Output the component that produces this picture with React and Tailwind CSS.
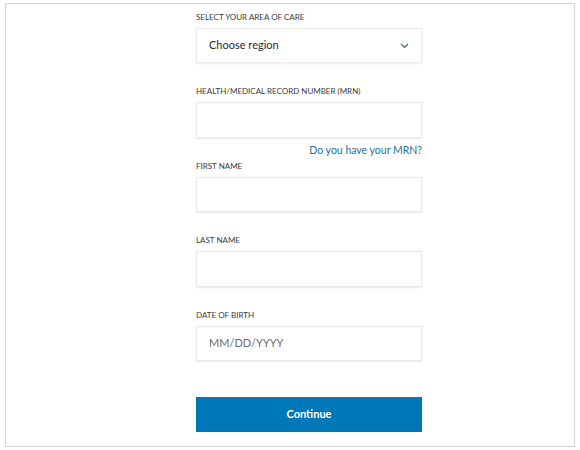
import React from 'react';

const Label = ({ children, className = '' }) => (
  <div className={`h-[12px] text-[8px] leading-[12px] text-[#3a3a3a] ${className}`}>
    {children}
  </div>
);

const Field = ({ placeholder, className = '' }) => (
  <div
    className={`h-[35px] mt-[5px] bg-white border border-[#e8e8e8] shadow-[0_1px_2px_rgba(0,0,0,0.08)] flex items-center px-[12px] text-[11px] text-[#6b6b6b] ${className}`}
  >
    {placeholder}
  </div>
);

const App = () => {
  return (
    <div className="w-[580px] h-[450px] bg-white pt-[3px] pl-[5px]" style={{ fontFamily: 'Lato, "Open Sans", sans-serif' }}>
      <div className="w-[570px] h-[444px] border border-[#d6d6d6] pl-[190px] pt-[7px]">
        <div className="w-[226px] flex flex-col">
          {/* Area of care */}
          <Label>SELECT YOUR AREA OF CARE</Label>
          <div className="h-[35px] mt-[5px] bg-white border border-[#ececec] shadow-[0_1px_2px_rgba(0,0,0,0.08)] flex items-center justify-between pl-[12px] pr-[12px] text-[11px] text-[#2b2b2b]">
            <span>Choose region</span>
            <svg width="9" height="6" viewBox="0 0 9 6" fill="none">
              <polyline points="1,1 4.5,4.5 8,1" stroke="#2f6e78" strokeWidth="1.2" />
            </svg>
          </div>

          {/* MRN */}
          <Label className="mt-[22px]">HEALTH/MEDICAL RECORD NUMBER (MRN)</Label>
          <Field className="h-[36px]" />
          <div className="h-[14px] mt-[5px] text-right text-[10.5px] leading-[14px] text-[#1f6f96]">
            Do you have your MRN?
          </div>

          {/* First name */}
          <Label className="mt-[3px]">FIRST NAME</Label>
          <Field />

          {/* Last name */}
          <Label className="mt-[22px]">LAST NAME</Label>
          <Field className="h-[36px]" />

          {/* DOB */}
          <Label className="mt-[22px]">DATE OF BIRTH</Label>
          <Field placeholder="MM/DD/YYYY" />

          <button className="h-[35px] mt-[36px] bg-[#0077b6] text-white text-[11px] font-bold">
            Continue
          </button>
        </div>
      </div>
    </div>
  );
};

export default App;
